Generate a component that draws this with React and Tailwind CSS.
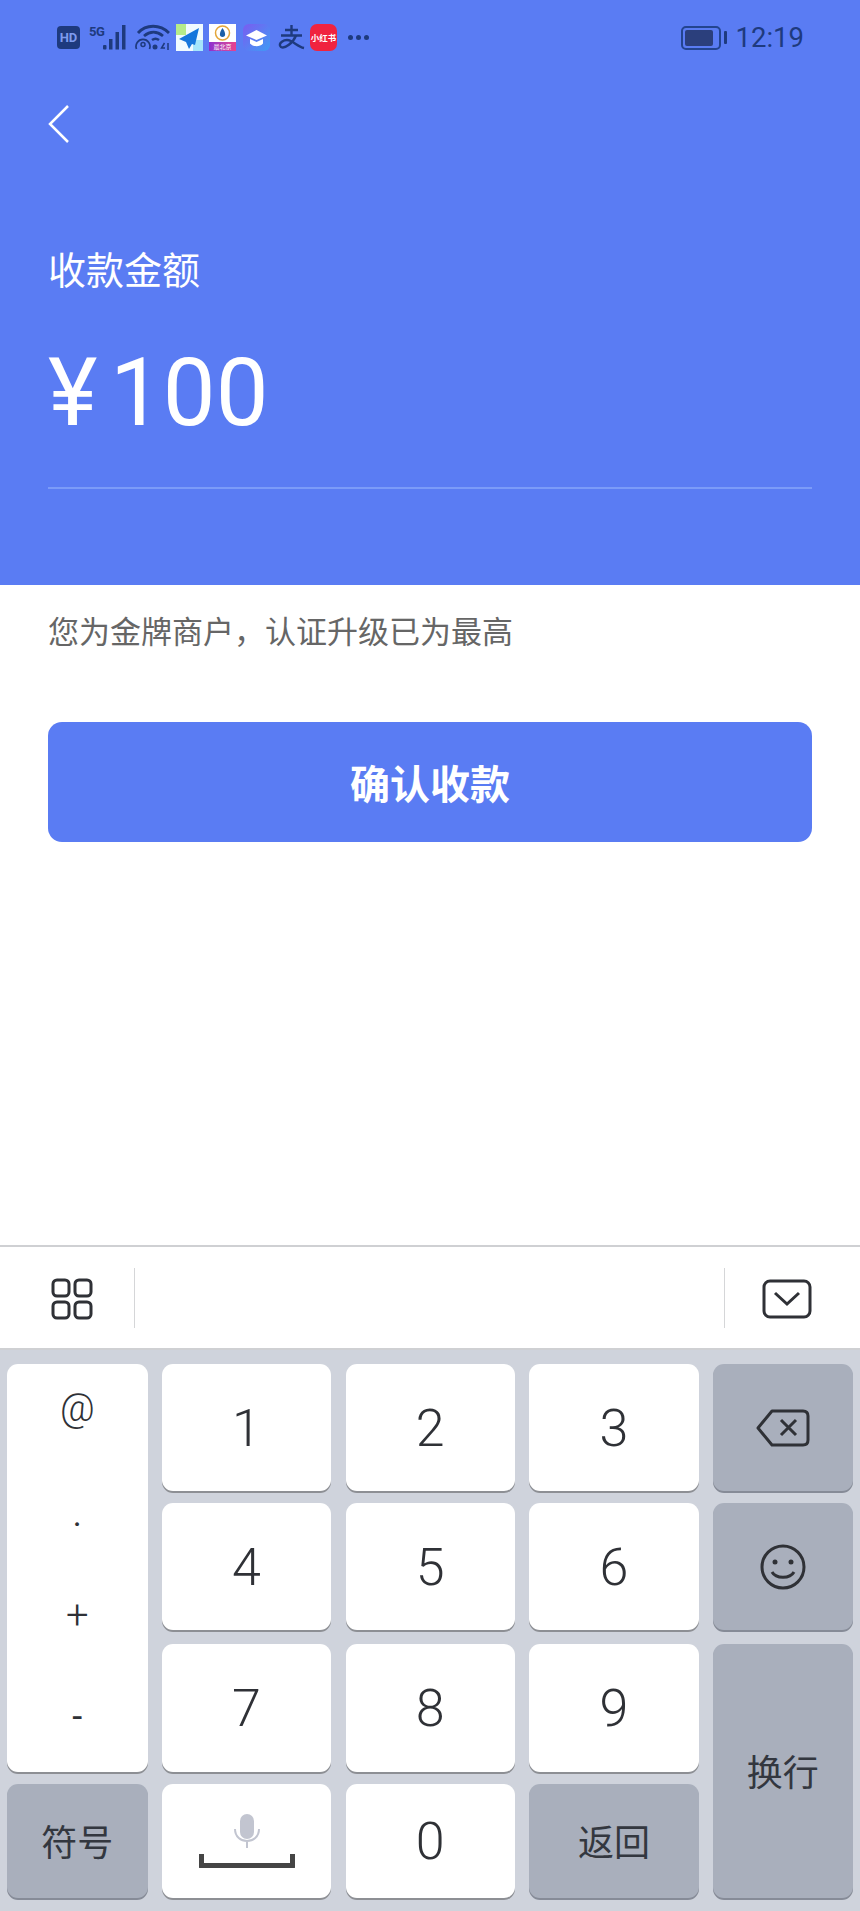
import React from "react";

const ink = "#1e3a7e";

function StatusIcons() {
  return (
    <div className="flex items-center">
      <div className="w-[23px] h-[23px] rounded-[4px] bg-[#1e3a7e] text-[#7d9bee] text-[13px] leading-none font-bold flex items-center justify-center font-['Roboto',sans-serif]">
        HD
      </div>
      <svg width="39" height="27" viewBox="0 0 39 27" className="ml-[9px]" fill={ink}>
        <text x="0" y="12" fontSize="13" fontWeight="700" letterSpacing="-0.5" fontFamily="Roboto, sans-serif">5G</text>
        <rect x="14" y="21" width="3.500" height="4.500" rx="1" />
        <rect x="20" y="15" width="3.500" height="10.500" />
        <rect x="26.500" y="8" width="3.500" height="17.500" />
        <rect x="33" y="1" width="3.500" height="24.500" />
      </svg>
      <svg width="36" height="27" viewBox="0 0 36 27" className="ml-[7px]" fill="none" stroke={ink} strokeWidth="2.800">
        <path d="M3 9 C11 0 25 0 34 9" />
        <path d="M9 12 C15 7 22 7 28 12" />
        <path d="M17 16 C19 14.500 22 14.500 24 16" strokeWidth="2.500" />
        <circle cx="8" cy="20.500" r="2" strokeWidth="1.500" />
        <path d="M1.500 25 A7 7 0 1 1 14.500 25" strokeWidth="1.700" />
        <circle cx="20" cy="23" r="2.500" fill={ink} stroke="none" />
        <path d="M29.500 19 L26.500 24 H30 M33 19 V26" strokeWidth="1.500" />
      </svg>
      <svg width="27" height="27" viewBox="0 0 27 27" className="ml-[5px]">
        <rect width="27" height="27" fill="#f0fbff" />
        <rect width="10" height="11" fill="#b5ec8a" />
        <rect x="17" y="16" width="10" height="11" fill="#a5e6fb" />
        <path d="M23 4 L3 15 L10 18 L13 25 L16 20 L19 21 Z" fill="#1677dc" />
      </svg>
      <div className="ml-[6px] w-[27px] h-[27px] bg-white flex flex-col">
        <svg width="27" height="18" viewBox="0 0 27 18" fill="none">
          <circle cx="13.500" cy="9" r="7" stroke="#e3a63a" strokeWidth="1.500" />
          <path d="M13.500 4 C10 9 10 13 13.500 13 C17 13 17 9 13.500 4 Z" fill="#1b5fa8" />
        </svg>
        <div className="h-[9px] bg-gradient-to-r from-[#8d2fd0] to-[#ea3f8d] text-white text-[6px] leading-[9px] text-center font-['Noto_Sans_CJK_SC',sans-serif]">
          最北京
        </div>
      </div>
      <svg width="27" height="27" viewBox="0 0 27 27" className="ml-[7px]">
        <defs>
          <linearGradient id="cap" x1="0" y1="0" x2="1" y2="1">
            <stop offset="0" stopColor="#7a5cf0" />
            <stop offset="1" stopColor="#3f9bf5" />
          </linearGradient>
        </defs>
        <rect width="27" height="27" rx="6" fill="url(#cap)" />
        <path d="M13.500 6 L24 11.500 L13.500 16 L3 11.500 Z" fill="#fff" />
        <path d="M7 15 L7 19.500 C10 23 17 23 20 19.500 L20 15 L13.500 18 Z" fill="#fff" />
      </svg>
      <svg width="27" height="27" viewBox="0 0 27 27" className="ml-[8px]" fill="none" stroke={ink} strokeWidth="2.400">
        <path d="M7 6 H20 M13.500 1 V11 M3 11.500 H24" />
        <path d="M18 11.500 C15 19 7 25 3 23 C-1 20 6 14 13 17 C17 19 21 23 26 24" />
      </svg>
      <div className="ml-[5px] w-[27px] h-[27px] rounded-[7px] bg-[#f0233f] text-white text-[8.500px] font-bold flex items-center justify-center font-['Noto_Sans_CJK_SC',sans-serif]">
        小红书
      </div>
      <div className="ml-[11px] flex gap-[3px]">
        <span className="w-[5px] h-[5px] rounded-full bg-[#1e3a7e]" />
        <span className="w-[5px] h-[5px] rounded-full bg-[#1e3a7e]" />
        <span className="w-[5px] h-[5px] rounded-full bg-[#1e3a7e]" />
      </div>
    </div>
  );
}

function Battery() {
  return (
    <div className="flex items-center">
      <div className="w-[40px] h-[24px] rounded-[5px] border-2 border-[#23448f] p-[2px]">
        <div className="w-[28px] h-full rounded-[2px] bg-[#2b3f7c]" />
      </div>
      <div className="ml-[3px] w-[3px] h-[13px] rounded-[1px] bg-[#1e3a7e]" />
    </div>
  );
}

function Key({ children, dark, className = "" }) {
  return (
    <div
      className={`rounded-[11px] flex items-center justify-center ${
        dark
          ? "bg-[#a9afbc] shadow-[0_2px_0_0_#868b97]"
          : "bg-white shadow-[0_2px_0_0_#8d8f94]"
      } ${className}`}
    >
      {children}
    </div>
  );
}

function Digit({ value, className = "" }) {
  return (
    <Key className={className}>
      <span className="pt-[2px] text-[52px] leading-none font-[350] text-[#2f3136] font-['Roboto',sans-serif]">
        {value}
      </span>
    </Key>
  );
}

function Cjk({ children, className = "" }) {
  return (
    <span className={`text-[36px] leading-none text-[#33373f] font-['Noto_Sans_CJK_SC',sans-serif] font-normal ${className}`}>
      {children}
    </span>
  );
}

export default function App() {
  return (
    <div className="w-[860px] h-[1911px] bg-white flex flex-col overflow-hidden font-['Noto_Sans_CJK_SC',sans-serif]">
      <section className="h-[585px] bg-[#5a7cf3] px-[48px] flex flex-col">
        <div className="h-[73px] pt-[24px] flex justify-between">
          <div className="ml-[9px]">
            <StatusIcons />
          </div>
          <div className="flex items-center h-[27px] mr-[8px]">
            <Battery />
            <span className="ml-[9px] text-[27.500px] leading-none text-[#1e3a7e] font-['Roboto',sans-serif]">
              12:19
            </span>
          </div>
        </div>
        <svg width="22" height="40" viewBox="0 0 22 40" className="mt-[31px]" fill="none" stroke="#fff" strokeWidth="2.500">
          <path d="M20 2 L2 20 L20 38" />
        </svg>
        <h1 className="mt-[99px] text-[38px] leading-[50px] font-normal text-white">收款金额</h1>
        <div className="mt-[50px] h-[100px] flex items-center text-white text-[94px] leading-none font-[450] font-['Roboto',sans-serif]">
          <span className="w-[62px]">¥</span>
          <span>100</span>
        </div>
        <div className="mt-[44px] h-[2px] bg-[#7b9bf8]" />
      </section>

      <p className="mt-[24px] px-[48px] text-[31px] leading-[42px] text-[#666]">
        您为金牌商户，认证升级已为最高
      </p>

      <button className="mt-[71px] mx-[48px] h-[120px] rounded-[14px] bg-[#5a7cf3] text-white text-[40px] font-bold">
        确认收款
      </button>

      <div className="mt-[403px] h-[105px] border-y-2 border-[#cfd0d3] flex items-center justify-between">
        <div className="flex items-center h-[60px] pl-[51px]">
          <svg width="42" height="42" viewBox="0 0 42 42" className="mt-[2px]" fill="none" stroke="#2f3136" strokeWidth="3">
            <rect x="2" y="2" width="16" height="16" rx="4" />
            <rect x="24" y="2" width="16" height="16" rx="4" />
            <rect x="2" y="24" width="16" height="16" rx="4" />
            <rect x="24" y="24" width="16" height="16" rx="4" />
          </svg>
          <div className="ml-[41px] w-[1px] h-[60px] bg-[#d5d6d8]" />
        </div>
        <div className="flex items-center h-[60px] pr-[48px]">
          <div className="w-[1px] h-[60px] bg-[#d5d6d8]" />
          <svg width="50" height="40" viewBox="0 0 50 40" className="ml-[37px] mt-[2px]" fill="none" stroke="#2f3136" strokeWidth="3">
            <rect x="2" y="2" width="46" height="36" rx="6" />
            <path d="M13 14 L25 25 L37 14" />
          </svg>
        </div>
      </div>

      <div className="flex-1 bg-[#cfd3dc] px-[7px] pt-[14px] grid grid-cols-[140.5px_169.5px_169.5px_169.5px_139.5px] grid-rows-[127px_127px_130px_114px] gap-x-[14.25px] gap-y-[12px]">
        <Key className="row-span-3 !items-start !justify-start">
          <div className="w-full flex flex-col items-center text-[#2f3136] font-['Roboto',sans-serif] font-light">
            <span className="mt-[22px] h-[44px] text-[38px] leading-[44px]">@</span>
            <span className="mt-[62px] h-[44px] text-[34px] leading-[44px] font-normal">.</span>
            <span className="mt-[58px] h-[44px] text-[40px] leading-[44px]">+</span>
            <span className="mt-[57px] h-[44px] text-[36px] leading-[44px] font-normal">-</span>
          </div>
        </Key>
        <Digit value="1" />
        <Digit value="2" />
        <Digit value="3" />
        <Key dark>
          <svg width="54" height="38" viewBox="0 0 54 38" fill="none" stroke="#2f3136" strokeWidth="3">
            <path d="M16 2 H47 Q52 2 52 7 V31 Q52 36 47 36 H16 L2 19 Z" strokeLinejoin="round" />
            <path d="M25 11 L40 26 M40 11 L25 26" />
          </svg>
        </Key>
        <Digit value="4" />
        <Digit value="5" />
        <Digit value="6" />
        <Key dark>
          <svg width="46" height="46" viewBox="0 0 46 46" fill="none" stroke="#2f3136" strokeWidth="3">
            <circle cx="23" cy="23" r="21" />
            <circle cx="15" cy="18" r="2.500" fill="#2f3136" stroke="none" />
            <circle cx="31" cy="18" r="2.500" fill="#2f3136" stroke="none" />
            <path d="M12 28 C16 35 30 35 34 28" />
          </svg>
        </Key>
        <Digit value="7" className="mt-[2px]" />
        <Digit value="8" className="mt-[2px]" />
        <Digit value="9" className="mt-[2px]" />
        <Key dark className="row-span-2 mt-[2px]">
          <Cjk className="pb-[3px]">换行</Cjk>
        </Key>
        <Key dark>
          <Cjk className="pb-[2px]">符号</Cjk>
        </Key>
        <Key className="flex-col">
          <svg width="26" height="34" viewBox="0 0 26 34" fill="none" stroke="#c2c5d0" strokeWidth="2">
            <rect x="6" y="0" width="14" height="25" rx="7" fill="#c2c5d0" stroke="none" />
            <path d="M1 15 C1 31 25 31 25 15 M13 27 V34" />
          </svg>
          <div className="mt-[6px] w-[96px] h-[14px] border-x-[5px] border-b-[5px] border-[#454545] rounded-b-[1px]" />
        </Key>
        <Digit value="0" />
        <Key dark>
          <Cjk className="pb-[2px]">返回</Cjk>
        </Key>
      </div>
    </div>
  );
}
